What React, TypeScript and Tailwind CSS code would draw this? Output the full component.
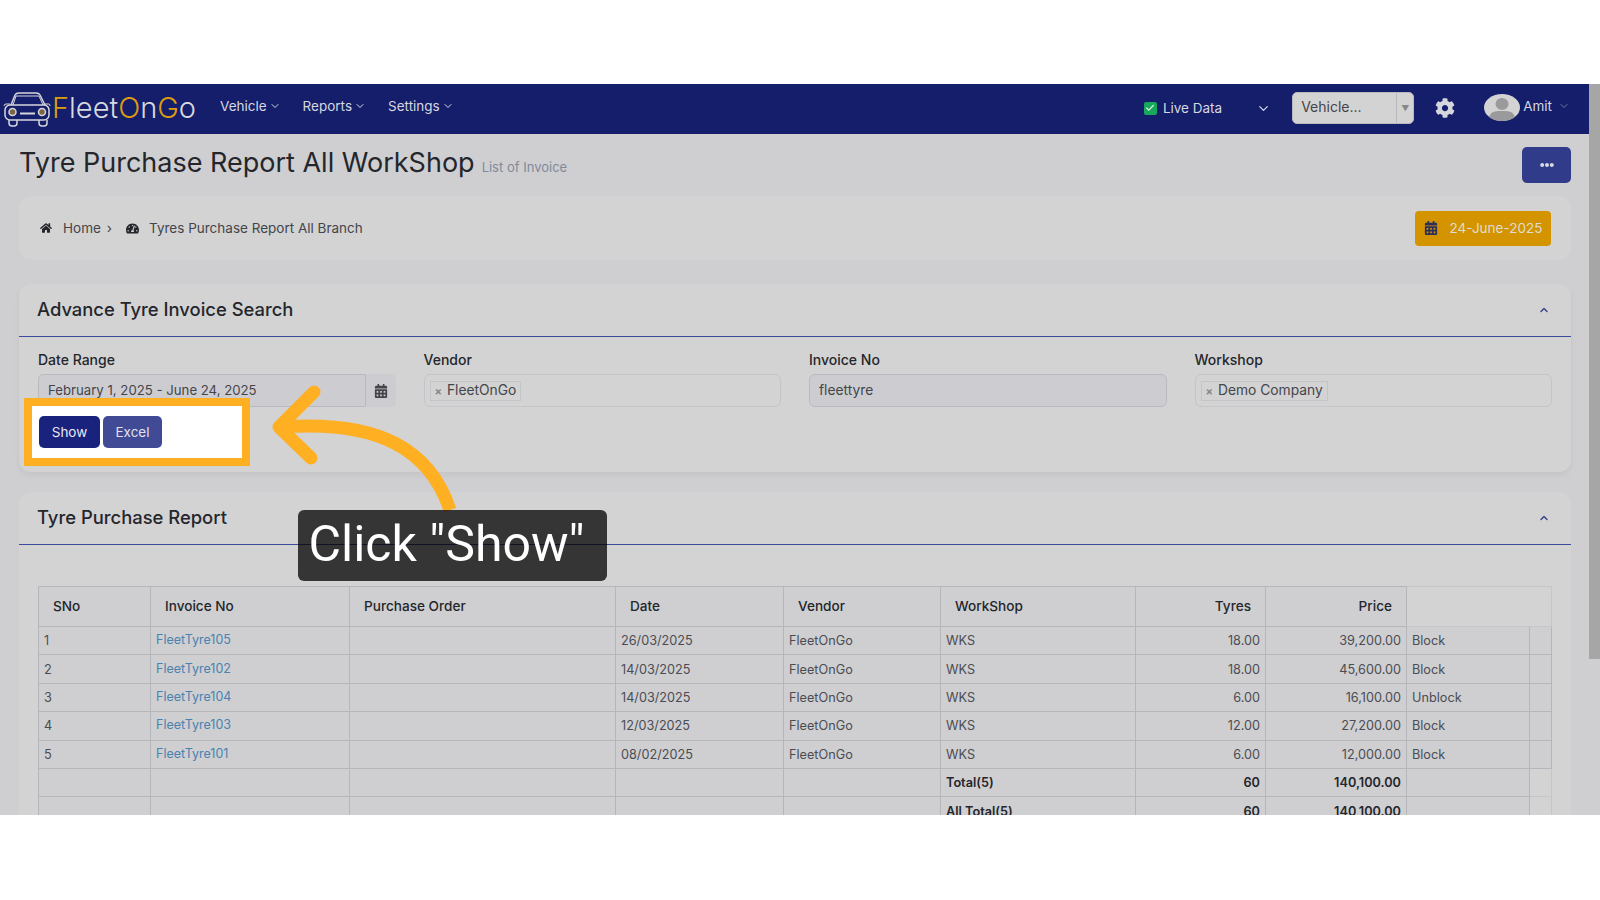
import React from 'react';
import { ChevronDown, ChevronUp, Check } from 'lucide-react';
import { FaHome, FaTachometerAlt, FaCalendarAlt, FaCog, FaEllipsisH } from 'react-icons/fa';

const rows = [
  { no: '1', invoice: 'FleetTyre105', date: '26/03/2025', tyres: '18.00', price: '39,200.00', status: 'Block' },
  { no: '2', invoice: 'FleetTyre102', date: '14/03/2025', tyres: '18.00', price: '45,600.00', status: 'Block' },
  { no: '3', invoice: 'FleetTyre104', date: '14/03/2025', tyres: '6.00', price: '16,100.00', status: 'Unblock' },
  { no: '4', invoice: 'FleetTyre103', date: '12/03/2025', tyres: '12.00', price: '27,200.00', status: 'Block' },
  { no: '5', invoice: 'FleetTyre101', date: '08/02/2025', tyres: '6.00', price: '12,000.00', status: 'Block' },
];

const thBase = 'border border-[#b4b6bc] bg-[#cfcfd1] px-[14px] text-[13.6px] font-medium text-[#24262c]';
const th = `${thBase} text-left`;
const thRight = `${thBase} text-right`;
const cell = 'border border-[#b4b6bc] bg-[#cfcfd1] px-[5px] text-[12.7px]';
const td = `${cell} text-[#4b4c53]`;
const tdBold = `${cell} font-semibold text-[#24262c]`;

const CarLogo = () => (
  <svg width="48" height="36" viewBox="0 0 48 36" fill="none" stroke="#d5d6da" strokeWidth="1.5" className="shrink-0">
    <path d="M8 14 L12 4 Q13 2 16 2 H33 Q36 2 37 4 L42 14" />
    <path d="M10 14 L13 5 H36 L40 14" strokeWidth="1" />
    <rect x="2" y="14" width="44" height="15" rx="5" />
    <circle cx="9.5" cy="21" r="3.5" fill="#7b6445" />
    <circle cx="39" cy="21" r="3.5" fill="#7b6445" />
    <path d="M17 22.5 H32" strokeWidth="2" />
    <path d="M6 29 V32 Q6 35 9 35 H11 Q14 35 14 32 V29" />
    <path d="M36 29 V32 Q36 35 39 35 H41 Q44 35 44 32 V29" />
    <path d="M7 13 H3 Q1 13 1 15 M42 13 H46 Q47 13 47 15" strokeWidth="1" />
  </svg>
);

const NavItem = ({ label, className }: { label: string; className: string }) => (
  <div className={`mb-[6px] flex items-center gap-[2px] text-[13.5px] text-[#d6d7e0] ${className}`}>
    {label}
    <ChevronDown size={12} strokeWidth={2} />
  </div>
);

const Avatar = () => (
  <svg width="36" height="27" viewBox="0 0 36 27" className="shrink-0">
    <ellipse cx="18" cy="13.5" rx="18" ry="13.5" fill="#d3d3d3" />
    <ellipse cx="18" cy="10" rx="6.5" ry="6" fill="#9a9a9c" />
    <path d="M5 23 Q7 17 14 17 H22 Q29 17 31 23 Q26 27 18 27 Q10 27 5 23 Z" fill="#9a9a9c" />
  </svg>
);

const Tag = ({ label }: { label: string }) => (
  <span className="flex h-[20px] items-center gap-[5px] border border-[#c4c5c9] px-[4px] text-[13.8px] leading-none text-[#44454b]">
    <span className="mt-[2px] text-[11px] font-bold text-[#85868b]">×</span>
    {label}
  </span>
);

const Field = ({ label, children }: { label: string; children: React.ReactNode }) => (
  <div>
    <div className="mb-[5px] h-[18px] text-[14px] font-medium leading-[18px] text-[#24262c]">{label}</div>
    {children}
  </div>
);

const CardHeader = ({ title }: { title: string }) => (
  <div className="flex h-[53px] items-center justify-between border-b border-[#3e4a9c] pl-[18px] pr-[21px]">
    <h3 className="text-[18.4px] font-medium text-[#24262c]">{title}</h3>
    <ChevronUp size={12} strokeWidth={2.5} className="text-[#2e3a8a]" />
  </div>
);

export default function App() {
  return (
    <div className="flex h-[900px] w-[1600px] flex-col overflow-hidden bg-white font-['Inter',sans-serif]">
      <div className="h-[84px] shrink-0" />
      <div className="flex h-[731px] shrink-0 bg-[#cfcfd1]">
        <div className="relative w-[1589px] shrink-0 overflow-hidden">
          {/* Navbar */}
          <div className="flex h-[50px] items-center bg-[#141e6a]">
            <div className="ml-[3px] flex items-center">
              <CarLogo />
              <span className="mb-[3px] ml-[1px] text-[29px] font-light leading-none text-[#d8d9de]">
                <span className="text-[#dc9b10]">F</span>leet<span className="text-[#dc9b10]">O</span>n
                <span className="text-[#dc9b10]">G</span>o
              </span>
            </div>
            <NavItem label="Vehicle" className="ml-[24px]" />
            <NavItem label="Reports" className="ml-[22px]" />
            <NavItem label="Settings" className="ml-[22px]" />
            <div className="ml-auto flex items-center">
              <div className="mb-[2px] flex h-[13px] w-[13px] items-center justify-center rounded-[2px] bg-[#17a85d]">
                <Check size={10} strokeWidth={3} className="text-[#d8f0e0]" />
              </div>
              <span className="mb-[2px] ml-[6px] text-[13.5px] text-[#d6d7e0]">Live Data</span>
              <ChevronDown size={15} strokeWidth={2} className="mb-[2px] ml-[34px] text-[#d6d7e0]" />
              <div className="mb-[2px] ml-[21px] flex h-[32px] w-[122px] overflow-hidden rounded-[5px] border border-[#b9bac0] bg-[#d3d3d3]">
                <span className="flex-1 pl-[8px] text-[14px] leading-[28px] text-[#44454b]">Vehicle...</span>
                <span className="flex w-[17px] items-center justify-center border-l border-[#b9bac0] text-[8px] text-[#85868b]">▼</span>
              </div>
              <FaCog size={20} className="mb-[2px] ml-[21px] text-[#d6d7dd]" />
              <div className="mb-[4px] ml-[29px]"><Avatar /></div>
              <span className="mb-[6px] ml-[3px] text-[13.5px] text-[#d6d7e0]">Amit</span>
              <ChevronDown size={12} strokeWidth={1.5} className="mb-[6px] ml-[6px] mr-[19px] text-[#8f93b8]" />
            </div>
          </div>

          {/* Page title */}
          <div className="flex h-[62px] items-center justify-between pl-[19px] pr-[18px]">
            <div className="mb-[4px] flex items-baseline">
              <h1 className="text-[27px] leading-none text-[#24262c]">Tyre Purchase Report All WorkShop</h1>
              <span className="ml-[7px] text-[13px] text-[#7f8a9c]">List of Invoice</span>
            </div>
            <button className="flex h-[36px] w-[49px] items-center justify-center rounded-[5px] bg-[#303b8a] text-[#d8d9e4]">
              <FaEllipsisH size={14} />
            </button>
          </div>

          <div className="ml-[19px] mr-[18px] flex flex-col">
            {/* Breadcrumb */}
            <div className="flex h-[64px] items-center justify-between rounded-xl bg-[#d3d3d3] pl-[21px] pr-[20px]">
              <div className="flex items-center text-[13.5px] text-[#44454b]">
                <FaHome size={12} className="text-[#24262c]" />
                <span className="ml-[11px]">Home</span>
                <span className="ml-[6px]">›</span>
                <FaTachometerAlt size={13} className="ml-[14px] text-[#24262c]" />
                <span className="ml-[10px]">Tyres Purchase Report All Branch</span>
              </div>
              <div className="flex h-[35px] w-[136px] items-center justify-center gap-[12px] rounded-[4px] bg-[#d49400] text-[13.5px] text-[#dddcd4]">
                <FaCalendarAlt size={14} className="text-[#2c2f5a]" />
                24-June-2025
              </div>
            </div>

            {/* Advance search */}
            <div className="mt-[24px] rounded-xl bg-[#d3d3d3] shadow-[0_3px_6px_rgba(0,0,0,0.05)]">
              <CardHeader title="Advance Tyre Invoice Search" />
              <div className="relative h-[135px] px-[19px] pt-[14px]">
                <div className="grid grid-cols-4 gap-[28px]">
                  <Field label="Date Range">
                    <div className="flex h-[33px]">
                      <div className="flex-1 rounded-l-[5px] border border-[#b9bac0] bg-[#cdcdd1] pl-[9px] text-[13.2px] leading-[31px] text-[#44454b]">
                        February 1, 2025 - June 24, 2025
                      </div>
                      <div className="flex w-[30px] items-center justify-center rounded-r-[5px] bg-[#cdcdd1] text-[#44454b]">
                        <FaCalendarAlt size={14} />
                      </div>
                    </div>
                  </Field>
                  <Field label="Vendor">
                    <div className="flex h-[33px] items-center rounded-[6px] border border-[#c4c5c9] pl-[5px]">
                      <Tag label="FleetOnGo" />
                    </div>
                  </Field>
                  <Field label="Invoice No">
                    <div className="h-[33px] rounded-[6px] border border-[#b9bac0] bg-[#cdcdd1] pl-[9px] text-[13.8px] leading-[31px] text-[#44454b]">
                      fleettyre
                    </div>
                  </Field>
                  <Field label="Workshop">
                    <div className="flex h-[33px] items-center rounded-[6px] border border-[#c4c5c9] pl-[5px]">
                      <Tag label="Demo Company" />
                    </div>
                  </Field>
                </div>
                {/* Highlight around the buttons */}
                <div className="absolute left-[5px] top-[61px] flex h-[68px] w-[226px] gap-[3px] border-8 border-[#ffaf22] bg-white pl-[7px] pt-[10px]">
                  <button className="h-[32px] w-[61px] rounded-[5px] bg-[#19237e] text-[13.5px] text-[#e8e9f2]">Show</button>
                  <button className="h-[32px] w-[59px] rounded-[5px] bg-[#414a95] text-[13.5px] text-[#e0e1ec]">Excel</button>
                </div>
              </div>
            </div>

            {/* Report */}
            <div className="mt-[20px] h-[400px] rounded-xl bg-[#d3d3d3]">
              <CardHeader title="Tyre Purchase Report" />
              <div className="px-[19px] pt-[41px]">
                <table className="w-[1513px] table-fixed border-collapse">
                  <colgroup>
                    <col className="w-[112px]" />
                    <col className="w-[199px]" />
                    <col className="w-[266px]" />
                    <col className="w-[168px]" />
                    <col className="w-[157px]" />
                    <col className="w-[195px]" />
                    <col className="w-[130px]" />
                    <col className="w-[141px]" />
                    <col className="w-[123px]" />
                    <col className="w-[22px]" />
                  </colgroup>
                  <thead>
                    <tr className="h-[40px]">
                      <th className={th}>SNo</th>
                      <th className={th}>Invoice No</th>
                      <th className={th}>Purchase Order</th>
                      <th className={th}>Date</th>
                      <th className={th}>Vendor</th>
                      <th className={th}>WorkShop</th>
                      <th className={thRight}>Tyres</th>
                      <th className={thRight}>Price</th>
                      <th colSpan={2} className="border border-[#c5c6ca]" />
                    </tr>
                  </thead>
                  <tbody>
                    {rows.map((r) => (
                      <tr key={r.no} className="h-[28.4px]">
                        <td className={td}>{r.no}</td>
                        <td className="border border-[#b4b6bc] bg-[#cfcfd1] px-[5px] text-[12.5px] text-[#4a82b0]">{r.invoice}</td>
                        <td className={td} />
                        <td className={td}>{r.date}</td>
                        <td className={td}>FleetOnGo</td>
                        <td className={td}>WKS</td>
                        <td className={`${td} text-right`}>{r.tyres}</td>
                        <td className={`${td} text-right`}>{r.price}</td>
                        <td className={td}>{r.status}</td>
                        <td className={td} />
                      </tr>
                    ))}
                    {['Total(5)', 'All Total(5)'].map((label) => (
                      <tr key={label} className="h-[28.4px]">
                        <td className={td} />
                        <td className={td} />
                        <td className={td} />
                        <td className={td} />
                        <td className={td} />
                        <td className={tdBold}>{label}</td>
                        <td className={`${tdBold} text-right`}>60</td>
                        <td className={`${tdBold} text-right`}>140,100.00</td>
                        <td className={td} />
                        <td className="border border-[#c5c6ca]" />
                      </tr>
                    ))}
                  </tbody>
                </table>
              </div>
            </div>
          </div>

          {/* Call-out arrow */}
          <svg width="200" height="140" viewBox="0 0 200 140" fill="none" stroke="#ffaf22" strokeWidth="13" strokeLinecap="round" strokeLinejoin="round" className="absolute left-[270px] top-[296px]">
            <path d="M180 130 C160 70 110 40 12 47" strokeLinecap="butt" />
            <path d="M44 12 L9 47 L41 78" />
          </svg>

          {/* Tooltip */}
          <div className="absolute left-[298px] top-[426px] flex h-[71px] w-[309px] items-center justify-center rounded-[6px] bg-[#000000bf] pb-[3px] pr-[12px] font-['Roboto',sans-serif] text-[50px] font-normal text-white">
            Click "Show"
          </div>
        </div>

        {/* Scrollbar */}
        <div className="w-[11px] shrink-0 bg-[#cfcfd1]">
          <div className="h-[575px] bg-[#a6a6a6]" />
        </div>
      </div>
      <div className="flex-1" />
    </div>
  );
}
